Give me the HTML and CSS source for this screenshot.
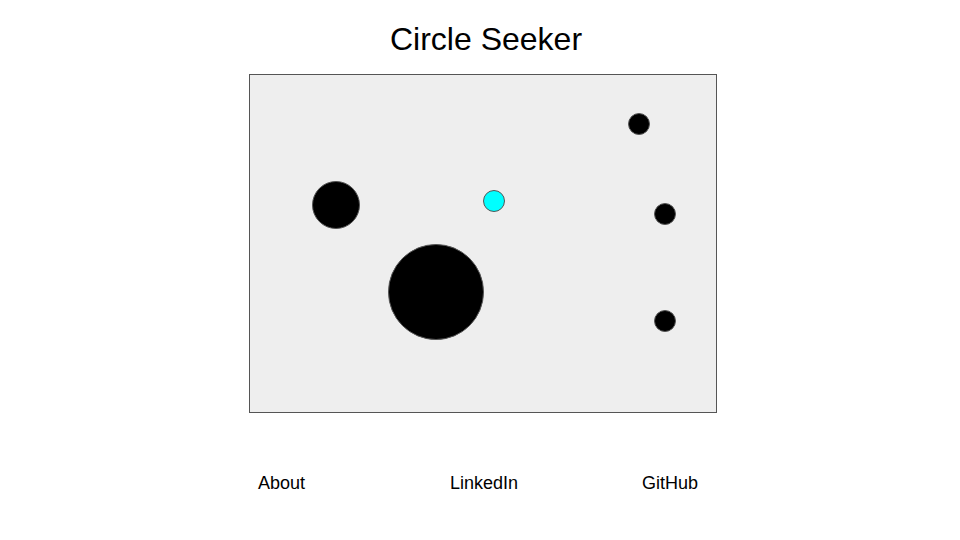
FILE: index.html
```html
<!DOCTYPE html>
<html lang="en">
<head>
  <meta charset="UTF-8">
  <meta name="viewport" content="width=device-width, initial-scale=1">
  <title>Circle Seeker</title>
  <link rel="stylesheet" href="styles.css">
</head>
<body>
  <h1 class="title">Circle Seeker</h1>

  <div id="board" class="board">
    <div class="circle" style="left: 62px; top: 106px; width: 48px; height: 48px;"></div>
    <div class="circle seeker" style="left: 233px; top: 115px; width: 22px; height: 22px;"></div>
    <div class="circle" style="left: 138px; top: 169px; width: 96px; height: 96px;"></div>
    <div class="circle" style="left: 378px; top: 38px; width: 22px; height: 22px;"></div>
    <div class="circle" style="left: 404px; top: 128px; width: 22px; height: 22px;"></div>
    <div class="circle" style="left: 404px; top: 235px; width: 22px; height: 22px;"></div>
  </div>

  <div class="links">
    <a href="#">About</a>
    <a href="#">LinkedIn</a>
    <a href="#">GitHub</a>
  </div>
</body>
</html>
```

FILE: styles.css
```css
body {
  margin: 0;
  font-family: "Liberation Sans", Arial, sans-serif;
  color: #000;
  background-color: #fff;
}
.title {
  margin: 21px 0 0 12px;
  font-size: 32px;
  font-weight: normal;
  text-align: center;
}
.board {
  position: relative;
  width: 466px;
  height: 337px;
  margin: 16px 0 0 249px;
  border: 1px solid #555;
  background-color: #eee;
}
.circle {
  position: absolute;
  box-sizing: border-box;
  border: 1px solid #555;
  border-radius: 50%;
  background-color: #000;
}
.circle.seeker {
  background-color: #0ff;
}
.links {
  display: flex;
  margin: 60px 0 0 192px;
}
.links a {
  width: 126px;
  padding-left: 66px;
  font-size: 18px;
  color: #000;
  text-decoration: none;
}
```
